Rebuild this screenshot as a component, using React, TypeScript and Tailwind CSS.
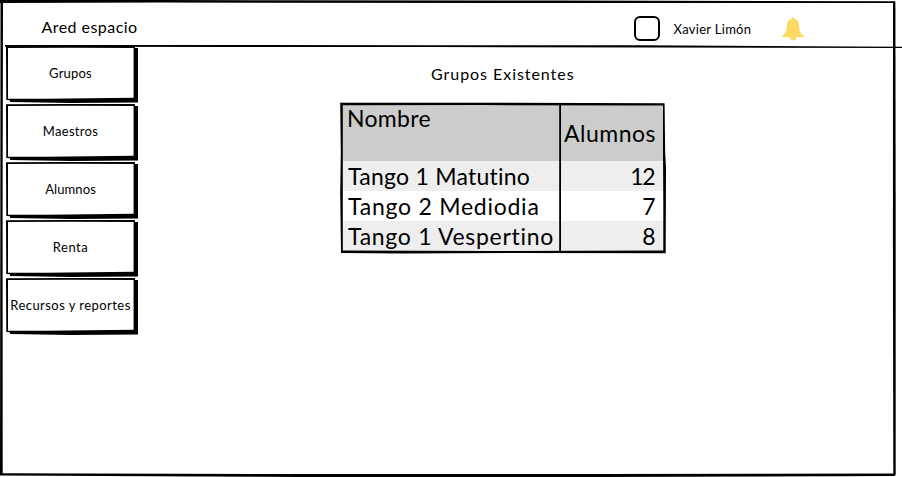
const menu = [
  { label: "Grupos", style: "tracking-[0.2px]" },
  { label: "Maestros", style: "tracking-[0.3px]" },
  { label: "Alumnos", style: "tracking-[0.1px]" },
  { label: "Renta", style: "tracking-[0.5px]" },
  { label: "Recursos y reportes", style: "tracking-[0.45px]" },
];

const groups = [
  { name: "Tango 1 Matutino", count: 12, row: "bg-[#eeeeee]", tracking: "tracking-[0.25px]" },
  { name: "Tango 2 Mediodia", count: 7, row: "bg-white", tracking: "tracking-[0.75px]" },
  { name: "Tango 1 Vespertino", count: 8, row: "bg-[#eeeeee]", tracking: "tracking-[0.7px]" },
];

function WindowFrame() {
  return (
    <svg className="pointer-events-none absolute inset-0" width="902" height="477" viewBox="0 0 902 477" fill="black">
      <path d="M0 0H160L560 0.6L895 1.2L895 3L620 3L160 2.6L0 3Z" />
      <path d="M0.5 1H3L2.6 200L2.7 475H0L0.3 230Z" />
      <path d="M893 2L895.4 1.5L895.7 220L895.7 475H893.3L892.9 240Z" />
      <path d="M0 473.2L300 474L600 474.1L895 473.4V476L600 477L300 477L0 475.6Z" />
      <path d="M5 45L420 45.2L640 45.3L902 46.8V48L660 47.6L430 47L5 46.8Z" />
    </svg>
  );
}

function MenuButton({ label, style }: { label: string; style: string }) {
  return (
    <button className="relative flex h-[58px] w-[132px] items-center justify-center pb-[5px] pr-[3px]">
      <svg className="absolute left-0 top-0" width="132" height="58" viewBox="0 0 132 58" fill="black">
        <path d="M0 0.3L60 0H129V2H132V56.6L65 56.9L4 56V54.3L0.3 54Z M2 2V52.8H40L127.6 51.7V2L65 1.7Z" fillRule="evenodd" />
      </svg>
      <span className={"relative whitespace-nowrap text-[13px] leading-4 " + style}>{label}</span>
    </button>
  );
}

function Bell() {
  return (
    <svg width="22" height="24" viewBox="0 0 22 24" fill="#ffd966">
      <path d="M9.8 1.5C9.8-.2 12.2-.2 12.2 1.5C15.6 2.4 17 5 17.2 9C17.5 14 18.6 16.6 21.5 18.5C22.3 19.2 21.8 20.2 21 20.2H1C.2 20.2-.3 19.2.5 18.5C3.4 16.6 4.5 14 4.8 9C5 5 6.4 2.4 9.8 1.5Z" />
      <path d="M7.5 19.5H14.5C14.2 22.3 12.8 23.5 11 23.5S7.8 22.3 7.5 19.5Z" />
    </svg>
  );
}

function GroupsTable() {
  return (
    <div className="relative ml-[204px] mt-[19px] h-[149px] w-[324px] pl-[1px] pt-[2px] text-[23px] leading-[30px]">
      <div className="flex h-[56px] bg-[#cccccc]">
        <div className="-mt-[2px] w-[218px] pl-[5px] tracking-[0.3px]">Nombre</div>
        <div className="flex flex-1 items-center justify-end pr-[9px] tracking-[0.5px]">Alumnos</div>
      </div>
      {groups.map((g) => (
        <div key={g.name} className={"flex h-[30px] items-center " + g.row}>
          <div className={"w-[218px] whitespace-nowrap pl-[6px] " + g.tracking}>{g.name}</div>
          <div className="flex-1 pr-[11px] text-right -tracking-[1.5px]">{g.count}</div>
        </div>
      ))}
      <svg className="absolute -left-px -top-px" width="326" height="152" viewBox="-1 -1 326 152" fill="black">
        <path d="M-0.8 -0.3L90 -0.3L323.5 0.2L324.2 50L325 65L324.7 150.3L180 150L60 150.4L0 150L-0.8 90L-0.2 50Z M1.8 2.2V147.6L150 148L322.3 147.6V100L322 50V2.5L140 2.1Z" fillRule="evenodd" />
        <path d="M218.2 1H220V149H218.2Z" />
      </svg>
    </div>
  );
}

export default function App() {
  return (
    <div className="relative h-[477px] w-[902px] overflow-hidden bg-white font-[Lato,sans-serif] text-black">
      <header className="flex h-[46px] items-center">
        <h1 className="w-[594px] pl-[41.5px] pt-[7px] text-[16px] leading-5 tracking-[0.45px]">Ared espacio</h1>
        <span className="ml-[40px] mt-[11px] h-[25px] w-[26px] rounded-[6px] border-2 border-black" />
        <span className="ml-[13.5px] mt-[12px] w-[108.5px] text-[13px] leading-4 tracking-[0.3px]">Xavier Limón</span>
        <span className="mt-[12px]">
          <Bell />
        </span>
      </header>
      <div className="flex">
        <nav className="ml-[6px] w-[131px]">
          {menu.map((m) => (
            <MenuButton key={m.label} label={m.label} style={m.style} />
          ))}
        </nav>
        <main className="flex-1">
          <h2 className="ml-[294px] mt-[18px] text-[16px] leading-5 tracking-[0.95px]">Grupos Existentes</h2>
          <GroupsTable />
        </main>
      </div>
      <WindowFrame />
    </div>
  );
}
